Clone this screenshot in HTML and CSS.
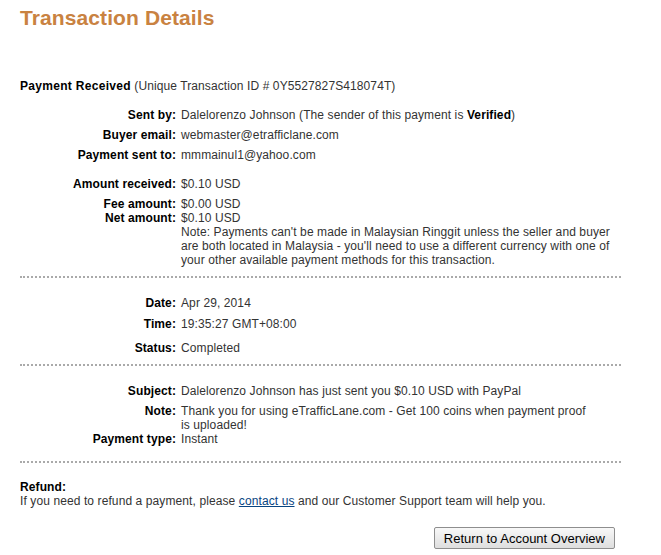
FILE: index.html
```html
<!DOCTYPE html>
<html lang="en">
<head>
    <meta charset="UTF-8">
    <title>Transaction Details</title>
    <link rel="stylesheet" href="styles.css">
</head>
<body>
    <div class="page">
        <h1>Transaction Details</h1>

        <p class="received"><strong>Payment Received</strong> (Unique Transaction ID # 0Y5527827S418074T)</p>

        <div class="row first">
            <div class="label">Sent by:</div>
            <div class="value">Dalelorenzo Johnson (The sender of this payment is <strong>Verified</strong>)</div>
        </div>
        <div class="row gap-s">
            <div class="label">Buyer email:</div>
            <div class="value">webmaster@etrafficlane.com</div>
        </div>
        <div class="row gap-s">
            <div class="label">Payment sent to:</div>
            <div class="value">mmmainul1@yahoo.com</div>
        </div>

        <div class="row gap-m">
            <div class="label">Amount received:</div>
            <div class="value">$0.10 USD</div>
        </div>
        <div class="row gap-s">
            <div class="label">Fee amount:</div>
            <div class="value">$0.00 USD</div>
        </div>
        <div class="row">
            <div class="label">Net amount:</div>
            <div class="value">$0.10 USD<br>
                Note: Payments can't be made in Malaysian Ringgit unless the seller and buyer<br>
                are both located in Malaysia - you'll need to use a different currency with one of<br>
                your other available payment methods for this transaction.</div>
        </div>

        <div class="divider"></div>

        <div class="row gap-l">
            <div class="label">Date:</div>
            <div class="value">Apr 29, 2014</div>
        </div>
        <div class="row time">
            <div class="label">Time:</div>
            <div class="value">19:35:27 GMT+08:00</div>
        </div>
        <div class="row status">
            <div class="label">Status:</div>
            <div class="value">Completed</div>
        </div>

        <div class="divider"></div>

        <div class="row gap-l">
            <div class="label">Subject:</div>
            <div class="value">Dalelorenzo Johnson has just sent you $0.10 USD with PayPal</div>
        </div>
        <div class="row gap-s">
            <div class="label">Note:</div>
            <div class="value">Thank you for using eTrafficLane.com - Get 100 coins when payment proof<br>is uploaded!</div>
        </div>
        <div class="row">
            <div class="label">Payment type:</div>
            <div class="value">Instant</div>
        </div>

        <div class="divider bottom"></div>

        <div class="refund">
            <strong>Refund:</strong><br>
            If you need to refund a payment, please <a href="#">contact us</a> and our Customer Support team will help you.
        </div>

        <div class="actions">
            <button type="button">Return to Account Overview</button>
        </div>
    </div>
</body>
</html>
```

FILE: styles.css
```css
body {
    margin: 0;
    background-color: #fff;
    font-family: "Liberation Sans", Arial, sans-serif;
    font-size: 12px;
    line-height: 14px;
    letter-spacing: 0.1px;
    color: #333;
}

.page {
    width: 601px;
    padding: 6px 20px 0;
}

h1 {
    margin: 0;
    font-size: 21px;
    line-height: 24px;
    letter-spacing: 0.1px;
    color: #c98241;
}

strong {
    color: #000;
}

.received {
    margin: 49px 0 0;
}

.received strong {
    letter-spacing: 0.3px;
}

.row {
    display: flex;
}

.row.first {
    margin-top: 15px;
}

.row.gap-s {
    margin-top: 6px;
}

.row.gap-m {
    margin-top: 15px;
}

.row.gap-l {
    margin-top: 18px;
}

.row.time {
    margin-top: 7px;
}

.row.status {
    margin-top: 10px;
}

.label {
    width: 156px;
    flex-shrink: 0;
    text-align: right;
    font-weight: bold;
    color: #000;
}

.value {
    padding-left: 5px;
    white-space: nowrap;
}

.divider {
    margin-top: 9px;
    border-top: 2px dotted #aaa;
}

.divider.bottom {
    margin-top: 15px;
}

.refund {
    margin-top: 17px;
}

.refund a {
    color: #084482;
}

.actions {
    display: flex;
    justify-content: flex-end;
    margin-top: 19px;
    padding-right: 6px;
}

button {
    height: 22px;
    padding: 0 9px;
    font-family: "Liberation Sans", Arial, sans-serif;
    font-size: 13px;
    color: #000;
    background: linear-gradient(#f8f8f8, #dedede);
    border: 1px solid #8e8e8e;
    border-radius: 2px;
}
```
